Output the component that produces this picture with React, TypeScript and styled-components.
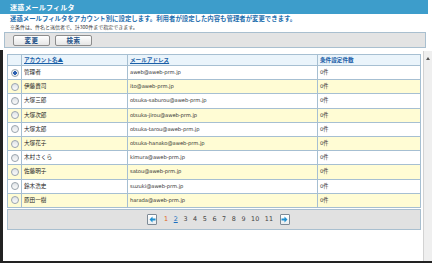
import React from 'react';
import styled, {createGlobalStyle} from "styled-components";

const GlobalStyle = createGlobalStyle`
    html, body {
        margin: 0;
        padding: 0;
        background: #ffffff;
    }
    body {
        font-family: "Noto Sans CJK JP", "DejaVu Sans", sans-serif;
    }
`

type Account = {
    name: string;
    mail: string;
    count: string;
}

const accounts: Account[] = [
    {name: "管理者", mail: "aweb@aweb-prm.jp", count: "0件"},
    {name: "伊藤貴司", mail: "ito@aweb-prm.jp", count: "0件"},
    {name: "大塚三郎", mail: "otsuka-saburou@aweb-prm.jp", count: "0件"},
    {name: "大塚次郎", mail: "otsuka-jirou@aweb-prm.jp", count: "0件"},
    {name: "大塚太郎", mail: "otsuka-tarou@aweb-prm.jp", count: "0件"},
    {name: "大塚花子", mail: "otsuka-hanako@aweb-prm.jp", count: "0件"},
    {name: "木村さくら", mail: "kimura@aweb-prm.jp", count: "0件"},
    {name: "佐藤明子", mail: "satou@aweb-prm.jp", count: "0件"},
    {name: "鈴木浩史", mail: "suzuki@aweb-prm.jp", count: "0件"},
    {name: "原田一樹", mail: "harada@aweb-prm.jp", count: "0件"},
];

const pages = ["3", "4", "5", "6", "7", "8", "9", "10", "11"];

const Arrow = ({dir}: {dir: "left" | "right"}) => (
    <svg width="7" height="7" viewBox="0 0 7 7">
        {dir === "left"
            ? <path d="M3.5 0.5 L0.5 3.5 L3.5 6.5 L3.5 4.6 L6.5 4.6 L6.5 2.4 L3.5 2.4 Z" fill="#1e8fd0"/>
            : <path d="M3.5 0.5 L6.5 3.5 L3.5 6.5 L3.5 4.6 L0.5 4.6 L0.5 2.4 L3.5 2.4 Z" fill="#1e8fd0"/>}
    </svg>
);

export default function App() {
    return (
        <Page>
            <GlobalStyle/>
            <TitleBar>迷惑メールフィルタ</TitleBar>
            <Description>
                <Lead>迷惑メールフィルタをアカウント別に設定します。利用者が設定した内容も管理者が変更できます。</Lead>
                <Note>※条件は、件名と送信者で、計300件まで指定できます。</Note>
            </Description>
            <Toolbar>
                <Button>変更</Button>
                <Button>検索</Button>
            </Toolbar>
            <Frame>
                <Content>
                    <Table>
                        <colgroup>
                            <col style={{width: 14}}/>
                            <col style={{width: 106}}/>
                            <col style={{width: 190}}/>
                            <col/>
                        </colgroup>
                        <thead>
                        <tr>
                            <HeadCell/>
                            <HeadCell><HeadLink>アカウント名▲</HeadLink></HeadCell>
                            <HeadCell><HeadLink>メールアドレス</HeadLink></HeadCell>
                            <HeadCell><HeadLabel>条件設定件数</HeadLabel></HeadCell>
                        </tr>
                        </thead>
                        <tbody>
                        {accounts.map((a, i) => (
                            <Row key={a.name} $odd={i % 2 === 1}>
                                <RadioCell><Radio $checked={i === 0}/></RadioCell>
                                <NameCell>{a.name}</NameCell>
                                <MailCell>{a.mail}</MailCell>
                                <MailCell>{a.count}</MailCell>
                            </Row>
                        ))}
                        </tbody>
                    </Table>
                    <Pagination>
                        <PageButton><Arrow dir="left"/></PageButton>
                        <Numbers>
                            <PageNum $current>1</PageNum>
                            <PageNum $link>2</PageNum>
                            {pages.map(p => <PageNum key={p}>{p}</PageNum>)}
                        </Numbers>
                        <PageButton><Arrow dir="right"/></PageButton>
                    </Pagination>
                </Content>
                <Scrollbar>
                    <ScrollArrow/>
                </Scrollbar>
            </Frame>
        </Page>
    );
}

const Page = styled.div`
    width: 436px;
    height: 268px;
    display: flex;
    flex-direction: column;
    overflow: hidden;
`
const TitleBar = styled.div`
    width: 418px;
    height: 14px;
    padding-left: 10px;
    background-color: #3d9dcb;
    color: #ffffff;
    font-weight: 700;
    font-size: 7px;
    line-height: 14px;
    letter-spacing: 0.2px;
`
const Description = styled.div`
    padding: 1px 10px 0;
    display: flex;
    flex-direction: column;
`
const Lead = styled.span`
    color: #1f6fae;
    font-weight: 700;
    font-size: 6.4px;
    line-height: 8px;
`
const Note = styled.span`
    color: #333333;
    font-size: 5px;
    line-height: 7px;
`
const Toolbar = styled.div`
    width: 422px;
    height: 16px;
    margin: 2px 0 0 4px;
    box-sizing: border-box;
    border: 1px solid #a9bfcf;
    background-color: #e3e3e3;
    display: flex;
    align-items: center;
    gap: 5px;
    padding-left: 8px;
`
const Button = styled.button`
    width: 37px;
    height: 11px;
    padding: 0;
    border: 1px solid #8c8c8c;
    border-radius: 2px;
    background: linear-gradient(#ffffff, #e6e6e6);
    color: #204f86;
    font-family: "Noto Sans CJK JP", sans-serif;
    font-weight: 700;
    font-size: 6.5px;
    line-height: 9px;
    letter-spacing: 0.5px;
`
const Frame = styled.div`
    width: 432px;
    height: 213px;
    margin-top: 2px;
    box-sizing: border-box;
    border-left: 3px solid #222222;
    border-bottom: 2px solid #222222;
    display: flex;
`
const Content = styled.div`
    flex: 1;
    padding: 4px 2px 0 4px;
`
const Table = styled.table`
    width: 100%;
    border-collapse: collapse;
    table-layout: fixed;
    border: 1px solid #a6bfd2;
`
const HeadCell = styled.th`
    height: 10px;
    padding: 0 2px;
    background-color: #eaf4fb;
    border: 1px solid #a6bfd2;
    text-align: left;
    font-size: 5.6px;
    line-height: 10px;
`
const HeadLink = styled.span`
    color: #1a5fa8;
    font-weight: 700;
    text-decoration: underline;
`
const HeadLabel = styled.span`
    color: #1a5fa8;
    font-weight: 700;
`
const Row = styled.tr<{$odd: boolean}>`
    background-color: ${p => p.$odd ? "#fffcd4" : "#ffffff"};
`
const RadioCell = styled.td`
    height: 13.2px;
    padding: 0;
    border: 1px solid #a6bfd2;
    text-align: center;
    line-height: 0;
`
const Radio = styled.span<{$checked: boolean}>`
    display: inline-block;
    width: 6px;
    height: 6px;
    border-radius: 50%;
    border: 1px solid #9aa4ad;
    background: ${p => p.$checked
            ? "radial-gradient(circle, #2c5fb0 0 1.6px, #eef3f8 2px)"
            : "linear-gradient(#dfe3e7, #fbfbfb)"};
`
const NameCell = styled.td`
    padding: 0 2px;
    border: 1px solid #a6bfd2;
    color: #222222;
    font-size: 5.6px;
    line-height: 13px;
`
const MailCell = styled.td`
    padding: 0 2px;
    border: 1px solid #a6bfd2;
    color: #333333;
    font-family: "DejaVu Sans", "Noto Sans CJK JP", sans-serif;
    font-size: 5.2px;
    line-height: 13px;
    letter-spacing: -0.05px;
`
const Pagination = styled.div`
    height: 21px;
    margin-top: 1px;
    box-sizing: border-box;
    border: 1px solid #a9bfcf;
    background-color: #e1e1e1;
    display: flex;
    align-items: center;
    justify-content: center;
    gap: 7px;
    padding-left: 9px;
`
const PageButton = styled.span`
    width: 10px;
    height: 11px;
    box-sizing: border-box;
    border: 1px solid #7d8a96;
    border-radius: 1px;
    background: linear-gradient(#ffffff, #e9edf0);
    display: flex;
    align-items: center;
    justify-content: center;
`
const Numbers = styled.span`
    display: flex;
    gap: 5.6px;
`
const PageNum = styled.span<{$current?: boolean; $link?: boolean}>`
    font-family: "DejaVu Sans", sans-serif;
    font-size: 6.4px;
    color: ${p => p.$current ? "#e0661c" : p.$link ? "#1a6fc0" : "#444444"};
    text-decoration: ${p => p.$link ? "underline" : "none"};
`
const Scrollbar = styled.div`
    width: 9px;
    box-sizing: border-box;
    margin-top: 1px;
    border-left: 1px solid #d2d2d2;
    background-color: #efefef;
    display: flex;
    justify-content: center;
    padding-top: 6px;
`
const ScrollArrow = styled.span`
    width: 0;
    height: 0;
    border-left: 2px solid transparent;
    border-right: 2px solid transparent;
    border-bottom: 3px solid #555555;
`
